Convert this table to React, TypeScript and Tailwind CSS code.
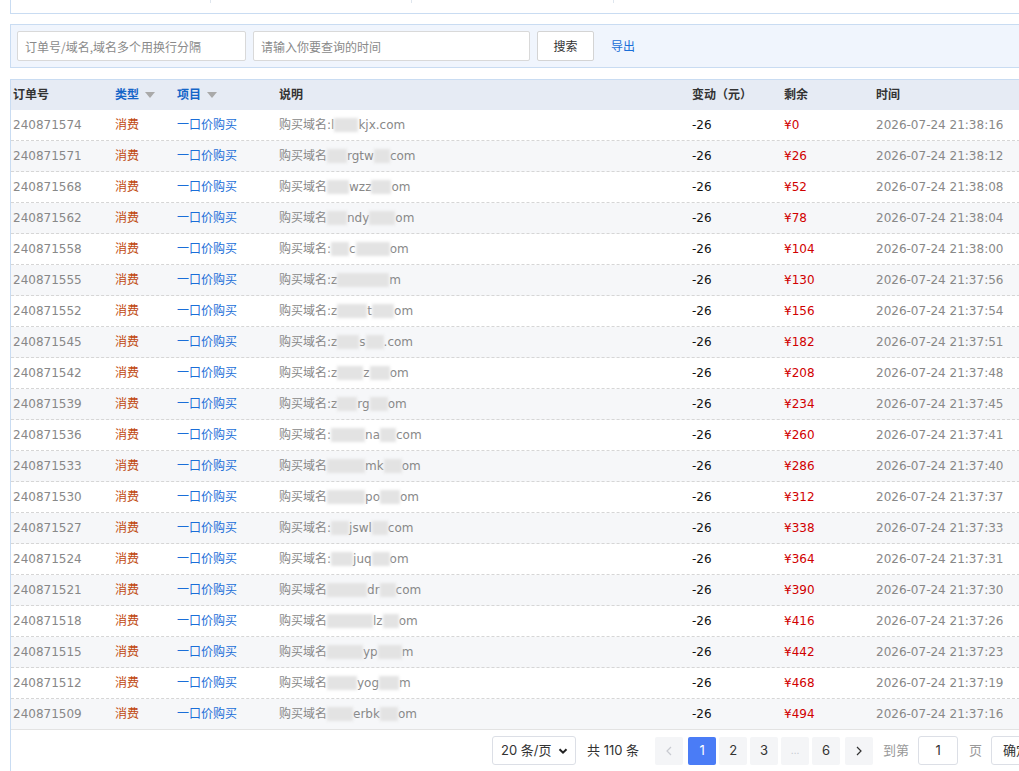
import React from 'react';

type Seg = string | number;

interface Row {
  id: string;
  desc: Seg[];
  left: number;
  time: string;
}

// 数字为打码区域宽度
const rows: Row[] = [
  { id: '240871574', desc: ['购买域名:l', 24, 'kjx.com'], left: 0, time: '2026-07-24 21:38:16' },
  { id: '240871571', desc: ['购买域名', 20, 'rgtw', 16, 'com'], left: 26, time: '2026-07-24 21:38:12' },
  { id: '240871568', desc: ['购买域名', 22, 'wzz', 20, 'om'], left: 52, time: '2026-07-24 21:38:08' },
  { id: '240871562', desc: ['购买域名', 20, 'ndy', 26, 'om'], left: 78, time: '2026-07-24 21:38:04' },
  { id: '240871558', desc: ['购买域名:', 18, 'c', 34, 'om'], left: 104, time: '2026-07-24 21:38:00' },
  { id: '240871555', desc: ['购买域名:z', 52, 'm'], left: 130, time: '2026-07-24 21:37:56' },
  { id: '240871552', desc: ['购买域名:z', 30, 't', 22, 'om'], left: 156, time: '2026-07-24 21:37:54' },
  { id: '240871545', desc: ['购买域名:z', 22, 's', 18, '.com'], left: 182, time: '2026-07-24 21:37:51' },
  { id: '240871542', desc: ['购买域名:z', 26, 'z', 20, 'om'], left: 208, time: '2026-07-24 21:37:48' },
  { id: '240871539', desc: ['购买域名:z', 20, 'rg', 18, 'om'], left: 234, time: '2026-07-24 21:37:45' },
  { id: '240871536', desc: ['购买域名:', 34, 'na', 16, 'com'], left: 260, time: '2026-07-24 21:37:41' },
  { id: '240871533', desc: ['购买域名', 38, 'mk', 18, 'om'], left: 286, time: '2026-07-24 21:37:40' },
  { id: '240871530', desc: ['购买域名', 38, 'po', 20, 'om'], left: 312, time: '2026-07-24 21:37:37' },
  { id: '240871527', desc: ['购买域名:', 18, 'jswl', 16, 'com'], left: 338, time: '2026-07-24 21:37:33' },
  { id: '240871524', desc: ['购买域名:', 22, 'juq', 18, 'om'], left: 364, time: '2026-07-24 21:37:31' },
  { id: '240871521', desc: ['购买域名', 40, 'dr', 16, 'com'], left: 390, time: '2026-07-24 21:37:30' },
  { id: '240871518', desc: ['购买域名', 46, 'lz', 16, 'om'], left: 416, time: '2026-07-24 21:37:26' },
  { id: '240871515', desc: ['购买域名', 36, 'yp', 24, 'm'], left: 442, time: '2026-07-24 21:37:23' },
  { id: '240871512', desc: ['购买域名', 30, 'yog', 20, 'm'], left: 468, time: '2026-07-24 21:37:19' },
  { id: '240871509', desc: ['购买域名', 26, 'erbk', 18, 'om'], left: 494, time: '2026-07-24 21:37:16' },
];

const cols = 'grid grid-cols-[104px_62px_102px_413px_92px_92px_1fr]';

const Caret = () => (
  <span className="ml-[6px] inline-block h-0 w-0 border-x-[5px] border-t-[6px] border-x-transparent border-t-[#a9a9a9]" />
);

const pageBtn = 'flex h-[28px] w-[28px] items-center justify-center rounded-[2px] bg-[#f4f5f7]';

export default function App() {
  return (
    <div className="relative h-[771px] w-[1019px] overflow-hidden bg-white text-[12px] [font-family:'DejaVu_Sans','Noto_Sans_CJK_SC',sans-serif]">
      <div className="ml-[10px] w-[1040px]">
        {/* 顶部卡片 */}
        <div className="flex h-[14px] items-start border-b border-l border-[#c9dcf2]">
          <div className="h-[3px] w-[200px] border-r border-[#dfe6ee]" />
          <div className="h-[3px] w-[201px] border-r border-[#dfe6ee]" />
          <div className="h-[3px] w-[202px] border-r border-[#dfe6ee]" />
        </div>

        {/* 搜索栏 */}
        <div className="mt-[10px] flex h-[44px] items-center gap-[7px] border border-r-0 border-[#c9dcf2] bg-[#f0f5fd] pl-[6px]">
          <input
            className="h-[30px] w-[229px] rounded-[2px] border border-[#d9d9d9] bg-white px-[7px] text-[12px] outline-none placeholder:text-[#8a8a8a] [font-family:'Noto_Sans_CJK_SC',sans-serif]"
            placeholder="订单号/域名,域名多个用换行分隔"
          />
          <input
            className="h-[30px] w-[277px] rounded-[2px] border border-[#d9d9d9] bg-white px-[7px] text-[12px] outline-none placeholder:text-[#8a8a8a] [font-family:'Noto_Sans_CJK_SC',sans-serif]"
            placeholder="请输入你要查询的时间"
          />
          <button className="h-[30px] w-[57px] rounded-[2px] border border-[#d4d4d4] bg-white text-[12px] text-[#333] [font-family:'Noto_Sans_CJK_SC',sans-serif]">
            搜索
          </button>
          <span className="ml-[10px] text-[12px] text-[#1a6ed8] [font-family:'Noto_Sans_CJK_SC',sans-serif]">导出</span>
        </div>

        {/* 表格 */}
        <div className="mt-[11px] border-l border-t border-[#c9dcf2]">
          <div className={`${cols} h-[30px] items-center bg-[#e6ebf4] font-bold text-[#333]`}>
            <div className="pl-[2px]">订单号</div>
            <div className="flex items-center text-[#1565c8]">
              类型
              <Caret />
            </div>
            <div className="flex items-center text-[#1565c8]">
              项目
              <Caret />
            </div>
            <div>说明</div>
            <div>变动（元）</div>
            <div>剩余</div>
            <div>时间</div>
          </div>
          {rows.map((r, i) => (
            <div
              key={r.id}
              className={`${cols} h-[31px] items-center ${i === rows.length - 1 ? 'border-b border-solid border-[#e3e3e3]' : 'border-b border-dashed border-[#d6d6d6]'} ${i % 2 === 1 ? 'bg-[#f6f7f9]' : 'bg-white'}`}
            >
              <div className="pl-[2px] text-[#888]">{r.id}</div>
              <div className="text-[#c0470e]">消费</div>
              <div className="text-[#1a6ed8]">一口价购买</div>
              <div className="flex items-center whitespace-nowrap text-[#888]">
                {r.desc.map((s, k) =>
                  typeof s === 'number' ? (
                    <span
                      key={k}
                      className="inline-block h-[14px] bg-[#e3e3e3] blur-[1.5px]"
                      style={{ width: s }}
                    />
                  ) : (
                    <span key={k}>{s}</span>
                  ),
                )}
              </div>
              <div className="text-[#111]">-26</div>
              <div className="text-[#d10000]">¥{r.left}</div>
              <div className="text-[#888]">{r.time}</div>
            </div>
          ))}

          {/* 分页 */}
          <div className="flex h-[41px] items-center pl-[481px] text-[13px] text-[#333] [font-family:'Inter','Noto_Sans_CJK_SC',sans-serif]">
            <div className="flex h-[29px] w-[84px] items-center justify-between rounded-[3px] border border-[#dcdfe6] pl-[8px] pr-[7px]">
              <span>20 条/页</span>
              <svg width="10" height="10" viewBox="0 0 10 10">
                <path d="M1.5 3.2 L5 6.7 L8.5 3.2" fill="none" stroke="#222" strokeWidth="2" />
              </svg>
            </div>
            <span className="ml-[11px]">共 110 条</span>
            <div className="ml-[16px] flex items-center gap-[3px]">
              <div className={`${pageBtn} text-[#c0c4cc]`}>
                <svg width="8" height="10" viewBox="0 0 8 10">
                  <path d="M6 1 L2 5 L6 9" fill="none" stroke="#c8cad0" strokeWidth="1.2" />
                </svg>
              </div>
              <div className="ml-[2px] flex h-[28px] w-[28px] items-center justify-center rounded-[2px] bg-[#4a7cf6] text-white">1</div>
              <div className={pageBtn}>2</div>
              <div className={pageBtn}>3</div>
              <div className={`${pageBtn} text-[10px] text-[#c0c4cc]`}>…</div>
              <div className={pageBtn}>6</div>
              <div className={`${pageBtn} ml-[2px]`}>
                <svg width="8" height="10" viewBox="0 0 8 10">
                  <path d="M2 1 L6 5 L2 9" fill="none" stroke="#333" strokeWidth="1.2" />
                </svg>
              </div>
            </div>
            <span className="ml-[10px] text-[#999]">到第</span>
            <div className="ml-[9px] flex h-[29px] w-[40px] items-center justify-center rounded-[3px] border border-[#dcdfe6]">1</div>
            <span className="ml-[11px] text-[#999]">页</span>
            <div className="ml-[9px] flex h-[29px] w-[50px] items-center justify-center rounded-[3px] border border-[#dcdfe6]">确定</div>
          </div>
        </div>
      </div>
    </div>
  );
}
